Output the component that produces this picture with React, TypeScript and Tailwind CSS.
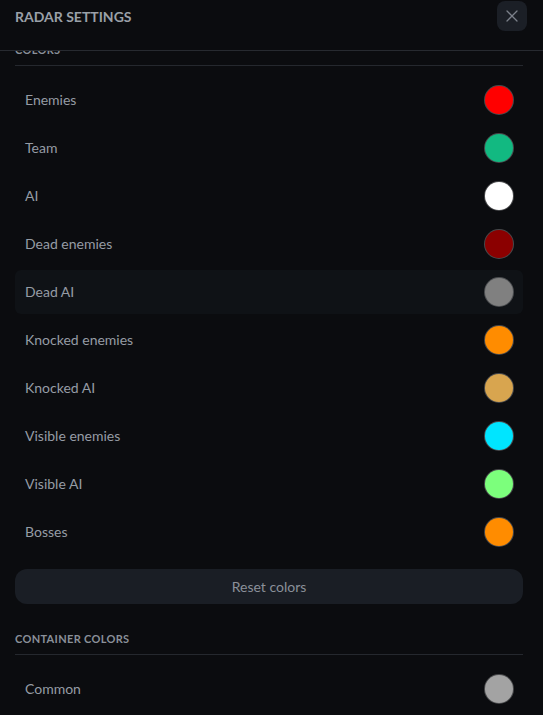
import {X} from 'lucide-react'

type ColorRow = {label: string, color: string}

const colors: ColorRow[] = [
	{label: 'Enemies', color: '#ff0000'},
	{label: 'Team', color: '#12b981'},
	{label: 'AI', color: '#ffffff'},
	{label: 'Dead enemies', color: '#8b0000'},
	{label: 'Dead AI', color: '#808080'},
	{label: 'Knocked enemies', color: '#ff8c00'},
	{label: 'Knocked AI', color: '#d8a54f'},
	{label: 'Visible enemies', color: '#00e5ff'},
	{label: 'Visible AI', color: '#7cff7c'},
	{label: 'Bosses', color: '#ff8c00'},
]

const containerColors: ColorRow[] = [
	{label: 'Common', color: '#a3a3a3'},
]

const SectionLabel = ({title}: {title: string}) => (
	<p className="h-4 pb-[7px] box-content border-b border-[#25282e] text-[11px] leading-4 font-bold tracking-[0.03em] uppercase text-[#8a9099]">
		{title}
	</p>
)

const Row = ({row, active}: {row: ColorRow, active?: boolean}) => (
	<div className={`flex items-center justify-between h-11 pl-[10px] pr-[10px] rounded-md ${active ? 'bg-[#0f1216]' : ''}`}>
		<span className="text-[14px] leading-5 text-[#969ca5]">{row.label}</span>
		<span
			className="w-7 h-7 rounded-full ring-1 ring-white/25"
			style={{backgroundColor: row.color}}
		/>
	</div>
)

const App = () => {
	return (
		<main className="w-[543px] h-[715px] overflow-hidden flex flex-col bg-[#0b0c0f] font-['Lato',sans-serif]">
			<header className="h-[51px] shrink-0 flex items-start justify-between pl-[15px] pr-[16px] pt-[1px] border-b border-[#272a30]">
				<h1 className="h-[30px] flex items-center text-[14px] font-bold text-[#9aa0a8]">RADAR SETTINGS</h1>
				<button className="w-[30px] h-[30px] flex items-center justify-center rounded-lg bg-[#1b1f26]">
					<X className="w-5 h-5 text-[#7b818a]" strokeWidth={1.5} />
				</button>
			</header>

			<div className="flex-1 overflow-hidden">
				<div className="-mt-[9px] pl-[15px] pr-[20px]">
					<SectionLabel title="Colors" />
					<div className="flex flex-col gap-1 mt-3">
						{colors.map(row => (
							<Row key={row.label} row={row} active={row.label === 'Dead AI'} />
						))}
					</div>

					<button className="w-full h-[35px] mt-[15px] rounded-xl bg-[#1a1e25] text-[14px] text-[#8a9099]">
						Reset colors
					</button>

					<div className="mt-[27px]">
						<SectionLabel title="Container colors" />
					</div>
					<div className="flex flex-col gap-1 mt-3">
						{containerColors.map(row => (
							<Row key={row.label} row={row} />
						))}
					</div>
				</div>
			</div>
		</main>
	)
}

export default App
